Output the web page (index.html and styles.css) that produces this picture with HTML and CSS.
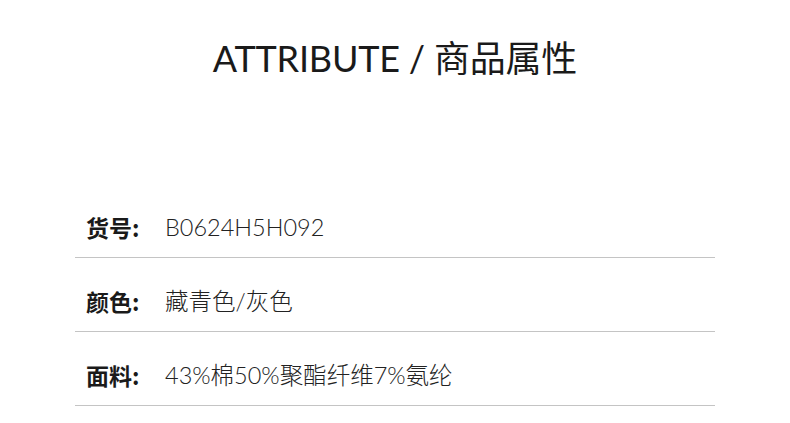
FILE: index.html
```html
<!DOCTYPE html>
<html lang="zh-CN">
<head>
<meta charset="utf-8">
<link rel="stylesheet" href="styles.css">
</head>
<body>
<div class="page">
  <h1 class="title">ATTRIBUTE / 商品属性</h1>
  <div class="list">
    <div class="row"><span class="label">货号:</span><span class="value">B0624H5H092</span></div>
    <div class="row"><span class="label">颜色:</span><span class="value">藏青色/灰色</span></div>
    <div class="row"><span class="label">面料:</span><span class="value">43%棉50%聚酯纤维7%氨纶</span></div>
  </div>
</div>
</body>
</html>
```
FILE: styles.css
```css
html, body { margin: 0; padding: 0; background: #fff; }
.page {
  width: 790px;
  height: 423px;
  overflow: hidden;
  font-family: Lato, "Noto Sans CJK SC", sans-serif;
  color: #1a1a1a;
}
.title {
  margin: 0;
  padding-top: 33px;
  text-align: center;
  font-size: 36px;
  font-weight: 400;
  line-height: 50px;
  letter-spacing: -0.2px;
}
.list {
  margin: 113px 75px 0 75px;
}
.row {
  display: flex;
  align-items: flex-end;
  height: 74px;
  border-bottom: 1px solid #c4c4c4;
  padding: 0 0 15px 11px;
  box-sizing: border-box;
  line-height: 30px;
}
.row:first-child { height: 62px; }
.label {
  width: 79px;
  font-family: "Noto Sans CJK SC", sans-serif;
  font-weight: 700;
  font-size: 23px;
}
.value {
  font-family: Lato, "Noto Sans CJK SC", sans-serif;
  font-weight: 300;
  font-size: 23.5px;
  color: #222;
}
```
